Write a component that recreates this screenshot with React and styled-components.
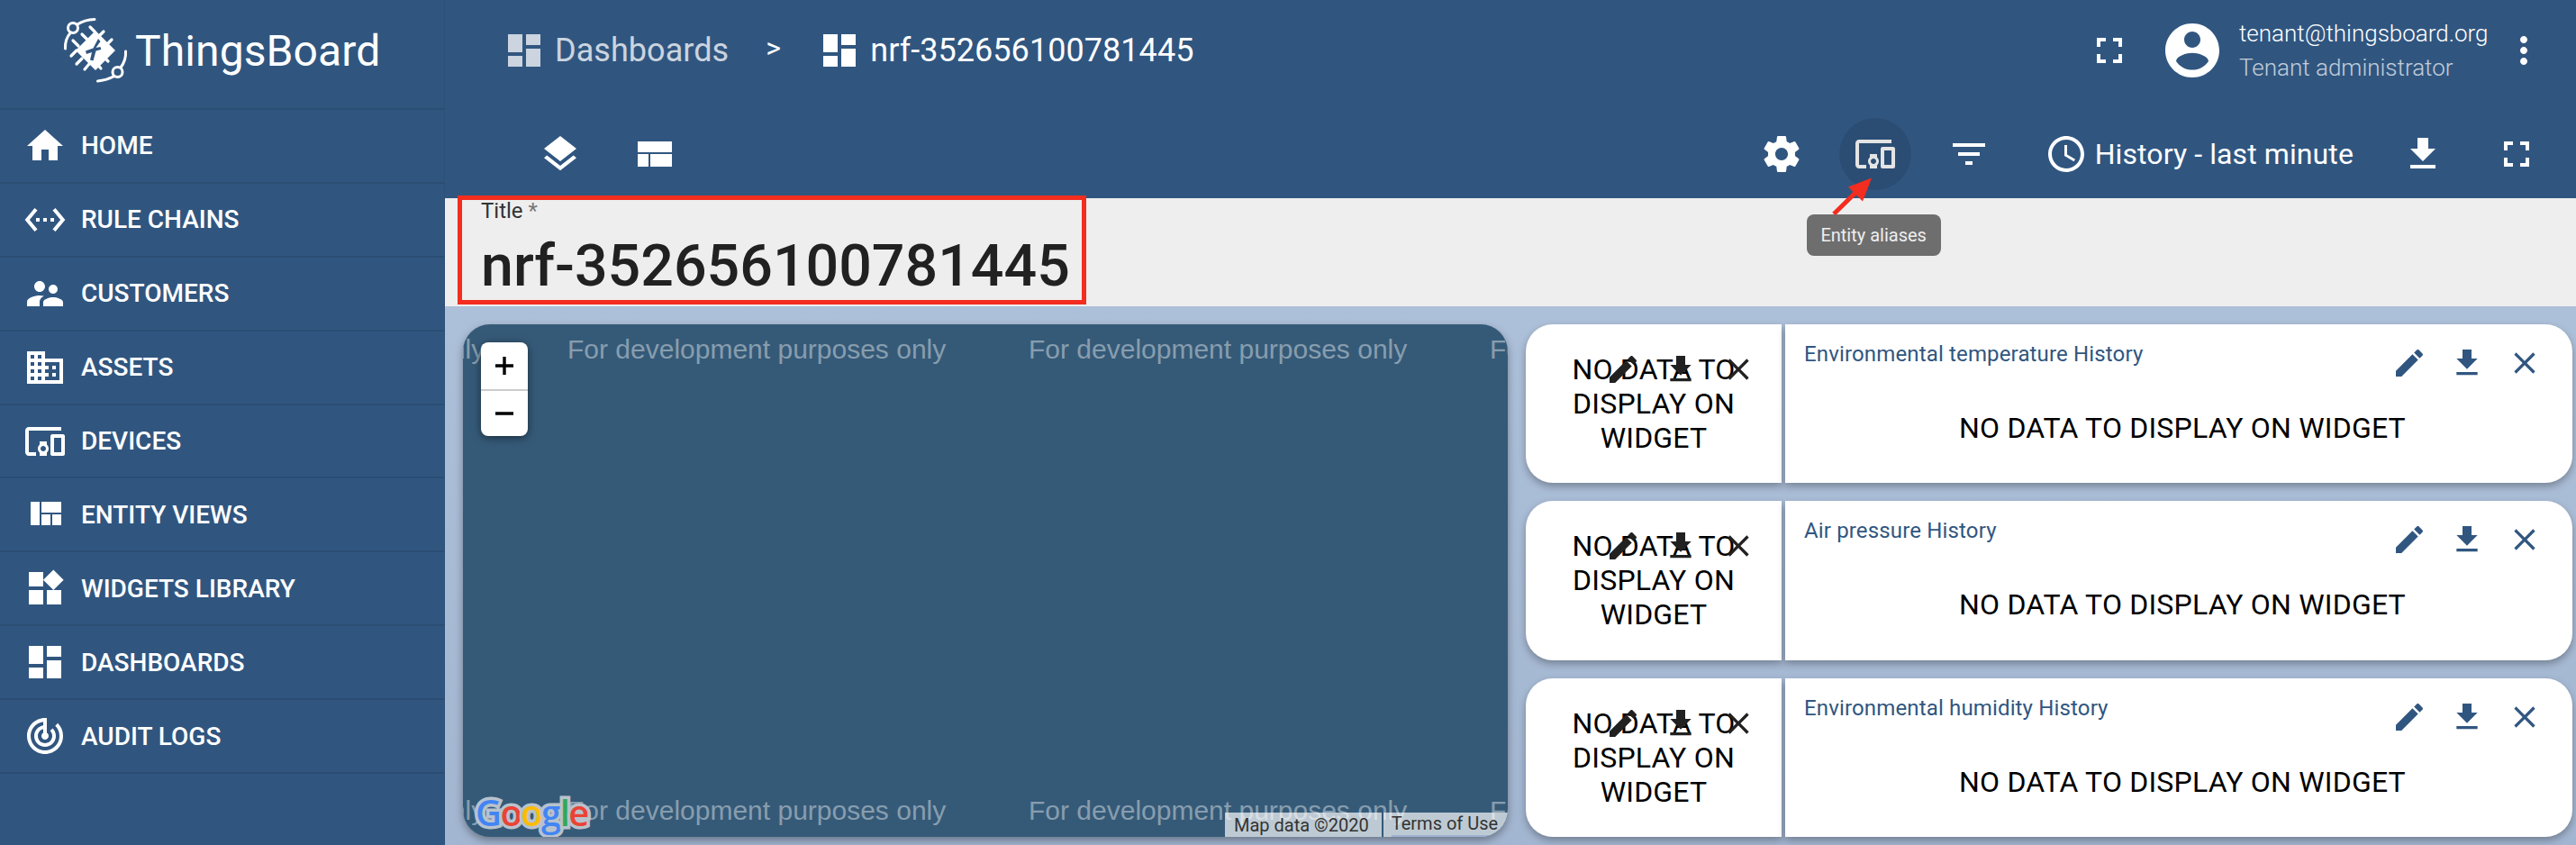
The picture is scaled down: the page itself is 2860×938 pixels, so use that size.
import React from "react";
import styled, { createGlobalStyle } from "styled-components";

const paths = {
  home: "M10 20v-6h4v6h5v-8h3L12 3 2 12h3v8z",
  rule: "M7.77 6.76L6.23 5.48.82 12l5.41 6.52 1.54-1.28L3.42 12l4.35-5.24zM7 13h2v-2H7v2zm10-2h-2v2h2v-2zm-6 2h2v-2h-2v2zm6.77-7.52l-1.54 1.28L20.58 12l-4.35 5.24 1.54 1.28L23.18 12l-5.41-6.52z",
  customers:
    "M16.5 12c1.38 0 2.49-1.12 2.49-2.5S17.88 7 16.5 7C15.12 7 14 8.12 14 9.5s1.12 2.5 2.5 2.5zM9 11c1.66 0 2.99-1.34 2.99-3S10.66 5 9 5C7.34 5 6 6.34 6 8s1.34 3 3 3zm7.5 3c-1.83 0-5.5.92-5.5 2.75V19h11v-2.25c0-1.83-3.67-2.75-5.5-2.75zM9 13c-2.33 0-7 1.17-7 3.5V19h7v-2.25c0-.85.33-2.34 2.37-3.47C10.5 13.1 9.66 13 9 13z",
  domain:
    "M12 7V3H2v18h20V7H12zM6 19H4v-2h2v2zm0-4H4v-2h2v2zm0-4H4V9h2v2zm0-4H4V5h2v2zm4 12H8v-2h2v2zm0-4H8v-2h2v2zm0-4H8V9h2v2zm0-4H8V5h2v2zm10 12h-8v-2h2v-2h-2v-2h2v-2h-2V9h8v10zm-2-8h-2v2h2v-2zm0 4h-2v2h2v-2z",
  devices:
    "M3 6h18V4H3c-1.1 0-2 .9-2 2v12c0 1.1.9 2 2 2h4v-2H3V6zm10 6H9v1.78c-.61.55-1 1.33-1 2.22s.39 1.67 1 2.22V20h4v-1.78c.61-.55 1-1.34 1-2.22s-.39-1.67-1-2.22V12zm-2 5.5c-.83 0-1.5-.67-1.5-1.5s.67-1.5 1.5-1.5 1.5.67 1.5 1.5-.67 1.5-1.5 1.5zM22 8h-6c-.5 0-1 .5-1 1v10c0 .5.5 1 1 1h6c.5 0 1-.5 1-1V9c0-.5-.5-1-1-1zm-1 10h-4v-8h4v8z",
  quilt: "M10 18h5v-6h-5v6zm-6 0h5V5H4v13zm12 0h5v-6h-5v6zM10 5v6h11V5H10z",
  widgets:
    "M13 13v8h8v-8h-8zM3 21h8v-8H3v8zM3 3v8h8V3H3zm13.66-1.31L11 7.34 16.66 13l5.66-5.66-5.66-5.65z",
  dashboard: "M3 13h8V3H3v10zm0 8h8v-6H3v6zm10 0h8V11h-8v10zm0-18v6h8V3h-8z",
  audit:
    "M19.07 4.93l-1.41 1.41C19.1 7.79 20 9.79 20 12c0 4.42-3.58 8-8 8s-8-3.58-8-8c0-4.08 3.05-7.44 7-7.93v2.02C8.16 6.57 6 9.03 6 12c0 3.31 2.69 6 6 6s6-2.69 6-6c0-1.66-.67-3.16-1.76-4.24l-1.41 1.41C15.55 9.9 16 10.9 16 12c0 2.21-1.79 4-4 4s-4-1.79-4-4c0-1.86 1.28-3.41 3-3.86v2.14c-.6.35-1 .98-1 1.72 0 1.1.9 2 2 2s2-.9 2-2c0-.74-.4-1.38-1-1.72V2h-1C6.48 2 2 6.48 2 12s4.48 10 10 10 10-4.48 10-10c0-2.76-1.12-5.26-2.93-7.07z",
  layers:
    "M11.99 18.54l-7.37-5.73L3 14.07l9 7 9-7-1.63-1.27-7.38 5.74zM12 16l7.36-5.73L21 9l-9-7-9 7 1.63 1.27L12 16z",
  compact: "M3 19h6v-7H3v7zm7 0h12v-7H10v7zM3 5v6h19V5H3z",
  fullscreen:
    "M7 14H5v5h5v-2H7v-3zm-2-4h2V7h3V5H5v5zm12 7h-3v2h5v-5h-2v3zM14 5v2h3v3h2V5h-5z",
  account:
    "M12 2C6.48 2 2 6.48 2 12s4.48 10 10 10 10-4.48 10-10S17.52 2 12 2zm0 3c1.66 0 3 1.34 3 3s-1.34 3-3 3-3-1.34-3-3 1.34-3 3-3zm0 14.2c-2.5 0-4.71-1.28-6-3.22.03-1.99 4-3.08 6-3.08 1.99 0 5.97 1.09 6 3.08-1.29 1.94-3.5 3.22-6 3.22z",
  more: "M12 8c1.1 0 2-.9 2-2s-.9-2-2-2-2 .9-2 2 .9 2 2 2zm0 2c-1.1 0-2 .9-2 2s.9 2 2 2 2-.9 2-2-.9-2-2-2zm0 6c-1.1 0-2 .9-2 2s.9 2 2 2 2-.9 2-2-.9-2-2-2z",
  settings:
    "M19.43 12.98c.04-.32.07-.64.07-.98s-.03-.66-.07-.98l2.11-1.65c.19-.15.24-.42.12-.64l-2-3.46c-.12-.22-.39-.3-.61-.22l-2.49 1c-.52-.4-1.08-.73-1.69-.98l-.38-2.65C14.46 2.18 14.25 2 14 2h-4c-.25 0-.46.18-.49.42l-.38 2.65c-.61.25-1.17.59-1.69.98l-2.49-1c-.23-.09-.49 0-.61.22l-2 3.46c-.13.22-.07.49.12.64l2.11 1.65c-.04.32-.07.65-.07.98s.03.66.07.98l-2.11 1.65c-.19.15-.24.42-.12.64l2 3.46c.12.22.39.3.61.22l2.49-1c.52.4 1.08.73 1.69.98l.38 2.65c.03.24.24.42.49.42h4c.25 0 .46-.18.49-.42l.38-2.65c.61-.25 1.17-.59 1.69-.98l2.49 1c.23.09.49 0 .61-.22l2-3.46c.12-.22.07-.49-.12-.64l-2.11-1.65zM12 15.5c-1.93 0-3.5-1.57-3.5-3.5s1.57-3.5 3.5-3.5 3.5 1.57 3.5 3.5-1.57 3.5-3.5 3.5z",
  filter: "M10 18h4v-2h-4v2zM3 6v2h18V6H3zm3 7h12v-2H6v2z",
  clock:
    "M11.99 2C6.47 2 2 6.48 2 12s4.47 10 9.99 10C17.52 22 22 17.52 22 12S17.52 2 11.99 2zM12 20c-4.42 0-8-3.58-8-8s3.58-8 8-8 8 3.58 8 8-3.58 8-8 8zm.5-13H11v6l5.25 3.15.75-1.23-4.5-2.67z",
  download: "M19 9h-4V3H9v6H5l7 7 7-7zM5 18v2h14v-2H5z",
  edit: "M3 17.25V21h3.75L17.81 9.94l-3.75-3.75L3 17.25zM20.71 7.04c.39-.39.39-1.02 0-1.41l-2.34-2.34c-.39-.39-1.02-.39-1.41 0l-1.83 1.83 3.75 3.75 1.83-1.83z",
  close:
    "M19 6.41L17.59 5 12 10.59 6.41 5 5 6.41 10.59 12 5 17.59 6.41 19 12 13.41 17.59 19 19 17.59 13.41 12z",
};

const menu = [
  ["home", "HOME"],
  ["rule", "RULE CHAINS"],
  ["customers", "CUSTOMERS"],
  ["domain", "ASSETS"],
  ["devices", "DEVICES"],
  ["quilt", "ENTITY VIEWS"],
  ["widgets", "WIDGETS LIBRARY"],
  ["dashboard", "DASHBOARDS"],
  ["audit", "AUDIT LOGS"],
];

const histories = [
  "Environmental temperature History",
  "Air pressure History",
  "Environmental humidity History",
];

const GlobalStyle = createGlobalStyle`
  html, body {
    margin: 0;
    padding: 0;
    background: #eeeeee;
  }
  * {
    box-sizing: border-box;
  }
`;

const Page = styled.div`
  display: flex;
  width: 2860px;
  height: 938px;
  overflow: hidden;
  font-family: Roboto, "Noto Sans", sans-serif;
`;

const Sidebar = styled.aside`
  flex: 0 0 494px;
  background: #305680;
  color: #fff;
  border-right: 1px solid #2d5078;
`;

const Brand = styled.div`
  display: flex;
  align-items: center;
  gap: 8px;
  height: 122px;
  padding: 0 0 8px 70px;
  border-bottom: 2px solid #2b4d73;
`;

const BrandName = styled.span`
  font-size: 48px;
  font-weight: 400;
  letter-spacing: 0.1px;
`;

const MenuRow = styled.div`
  display: flex;
  align-items: center;
  height: 81.9px;
  padding-left: 26px;
  gap: 16px;
  border-bottom: 2px solid #2b4d73;
  font-size: 28px;
  font-weight: 500;
`;

const Icon = styled.svg`
  display: block;
  flex: none;
  width: ${(p) => p.size || 48}px;
  height: ${(p) => p.size || 48}px;
  fill: currentColor;
`;

const Main = styled.main`
  flex: 1;
  display: flex;
  flex-direction: column;
  min-width: 0;
`;

const TopBar = styled.header`
  height: 220px;
  background: #305680;
  color: #fff;
`;

const CrumbRow = styled.div`
  display: flex;
  align-items: center;
  height: 112px;
  padding-left: 64px;
`;

const Crumb = styled.div`
  display: flex;
  align-items: center;
  gap: 10px;
  font-size: 36px;
  letter-spacing: 0.05px;
  opacity: ${(p) => (p.dim ? 0.75 : 1)};
`;

const CrumbArrow = styled.span`
  width: 99px;
  padding-left: 41px;
  font-size: 32px;
  margin-top: -6px;
`;

const UserArea = styled.div`
  display: flex;
  align-items: center;
  margin-left: auto;
  padding-right: 34px;
`;

const UserText = styled.div`
  width: 292px;
  margin-left: 12px;
  font-weight: 300;
  font-size: 26px;
  line-height: 38px;
`;

const UserRole = styled.div`
  opacity: 0.7;
`;

const ToolRow = styled.div`
  display: flex;
  align-items: center;
  height: 108px;
  padding: 9px 26px 0 104px;
`;

const ToolButton = styled.div`
  position: relative;
  display: flex;
  align-items: center;
  justify-content: center;
  flex: none;
  width: 80px;
  height: 80px;
  border-radius: 50%;
  margin-left: ${(p) => p.offset || 0}px;
  background: ${(p) => (p.active ? "#2b4d73" : "transparent")};
  color: ${(p) => (p.active ? "#e4e4e4" : "#fff")};
`;

const ToolSpacer = styled.div`
  flex: 1;
`;

const HistoryLabel = styled.div`
  display: flex;
  align-items: center;
  gap: 8px;
  margin-left: 44px;
  font-size: 32px;
  letter-spacing: 0.1px;
`;

const Tooltip = styled.div`
  position: absolute;
  top: 107px;
  left: -36px;
  width: 149px;
  height: 46px;
  display: flex;
  align-items: center;
  justify-content: center;
  background: #6e6e6e;
  border-radius: 8px;
  color: #eeeeee;
  font-size: 20px;
  white-space: nowrap;
  z-index: 3;
`;

const Arrow = styled.svg`
  position: absolute;
  top: 60px;
  left: -14px;
  width: 60px;
  height: 50px;
  z-index: 4;
`;

const TitleBar = styled.section`
  position: relative;
  height: 120px;
  padding: 0 0 0 40px;
  background: #eeeeee;
  color: #212121;
`;

const TitleLabel = styled.div`
  padding-top: 1px;
  height: 33px;
  font-size: 24px;
  line-height: 26px;
  color: #333;
`;

const Req = styled.span`
  color: #777;
`;

const TitleValue = styled.div`
  font-size: 64.5px;
  font-weight: 500;
  line-height: 84px;
`;

const RedBox = styled.div`
  position: absolute;
  top: -3px;
  left: 14px;
  width: 698px;
  height: 121px;
  border: 5px solid #f32d1f;
`;

const Board = styled.section`
  flex: 1;
  display: grid;
  grid-template-columns: 1160px 1162px;
  column-gap: 20px;
  padding: 20px 0 9px 20px;
  background: linear-gradient(#adc0d9, #a3b6d1);
`;

const MapCard = styled.div`
  position: relative;
  overflow: hidden;
  background: #355a78;
  border-radius: 30px;
  box-shadow: 0 4px 10px rgba(0, 0, 0, 0.35);
`;

const Watermark = styled.span`
  position: absolute;
  top: ${(p) => p.y}px;
  left: ${(p) => p.x}px;
  font-family: "Liberation Sans", Arial, sans-serif;
  font-size: 30px;
  line-height: 32px;
  color: rgba(255, 255, 255, 0.42);
  white-space: nowrap;
`;

const Zoom = styled.div`
  position: absolute;
  top: 20px;
  left: 20px;
  width: 52px;
  height: 104px;
  display: grid;
  grid-template-rows: 1fr 1fr;
  background: #fff;
  border-radius: 8px;
  box-shadow: 0 2px 10px rgba(0, 0, 0, 0.5);
  color: #000;
`;

const ZoomBtn = styled.div`
  display: flex;
  align-items: center;
  justify-content: center;
  border-top: ${(p) => (p.second ? "2px solid #ccc" : "none")};
`;

const Google = styled.div`
  position: absolute;
  left: 14px;
  bottom: 5px;
  font-family: "Open Sans", "Liberation Sans", sans-serif;
  font-size: 40px;
  line-height: 44px;
  font-weight: 600;
  letter-spacing: -1.6px;
  -webkit-text-stroke: 7px #b8c2cd;
  paint-order: stroke fill;
`;

const GLetter = styled.span`
  color: ${(p) => p.c};
  paint-order: stroke fill;
`;

const Attribution = styled.div`
  position: absolute;
  right: 0;
  bottom: 0;
  width: 314px;
  height: 27px;
  display: flex;
  align-items: center;
  padding-left: 10px;
  background: rgba(255, 255, 255, 0.68);
  color: #333;
  font-size: 20px;
`;

const AttrTerms = styled.span`
  margin-left: 14px;
  padding-left: 9px;
  height: 27px;
  border-left: 2px solid #355a78;
`;

const TermsLink = styled.span`
  display: block;
  width: 116px;
  height: 27px;
  line-height: 25px;
  white-space: nowrap;
  border-bottom: 2px solid #9fb0d2;
`;

const Cards = styled.div`
  display: grid;
  grid-template-rows: repeat(3, 1fr);
  row-gap: 20px;
`;

const CardRow = styled.div`
  display: grid;
  grid-template-columns: 284px 874px;
  column-gap: 4px;
`;

const Widget = styled.div`
  position: relative;
  background: #fff;
  color: #000;
  border-radius: ${(p) => (p.side === "left" ? "30px 0 0 30px" : "0 30px 30px 0")};
  box-shadow: 0 4px 8px rgba(0, 0, 0, 0.3);
`;

const NoData = styled.div`
  position: absolute;
  left: 0;
  right: 0;
  bottom: 0;
  top: ${(p) => (p.side === "left" ? "0" : "54px")};
  display: flex;
  align-items: center;
  justify-content: center;
  padding: ${(p) => (p.side === "left" ? "0 40px" : "0 0 0 8px")};
  text-align: center;
  font-size: 32px;
  line-height: 38px;
  letter-spacing: 0.2px;
`;

const WidgetTitle = styled.div`
  position: absolute;
  top: 18px;
  left: 21px;
  font-size: 24px;
  line-height: 30px;
  letter-spacing: 0.15px;
  color: #305680;
`;

const WidgetActions = styled.div`
  position: absolute;
  display: flex;
  gap: 24px;
  top: ${(p) => (p.side === "left" ? "30px" : "23px")};
  right: ${(p) => (p.side === "left" ? "28px" : "33px")};
  color: ${(p) => (p.side === "left" ? "#212121" : "#305680")};
`;

function MaterialIcon({ name, size }) {
  return (
    <Icon size={size} viewBox="0 0 24 24" aria-hidden="true">
      <path d={paths[name]} />
    </Icon>
  );
}

function Logo() {
  return (
    <svg width="72" height="72" viewBox="0 0 72 72" fill="none">
      <g stroke="#fff" strokeWidth="3" strokeLinecap="round">
        <path d="M2.5 34C2 26 5 20 8.5 16" />
        <path d="M16 7C22 3 28 1.8 35 1.5" />
        <circle cx="11" cy="11" r="5.5" />
        <path d="M69.5 37C70 45 67 51 64 55" />
        <path d="M56 65C50 68 44 69.5 38.5 70" />
        <circle cx="60.5" cy="60" r="5.5" />
        <g strokeWidth="3.2">
          <path d="M21 18l7 7M30 10l5 5M45 15l-5 5M54 24l-4 4M11 25l6 6M9 42l6-6M15 51l6-6M24 57l5-6M50 48l-6-6M42 56l-5-6" />
        </g>
      </g>
      <path d="M36 14L58 36 36 58 14 36z" fill="#fff" />
      <path d="M39 23l2.5 3-5 7 5-1 .8 3-5.8 1.5-3 11-3.5-1 2-8.5-6 2-1-3.5 8.5-3z" fill="#305680" />
    </svg>
  );
}

function WidgetPane({ side, title }) {
  return (
    <Widget side={side}>
      <NoData side={side}>NO DATA TO DISPLAY ON WIDGET</NoData>
      {title && <WidgetTitle>{title}</WidgetTitle>}
      <WidgetActions side={side}>
        <MaterialIcon name="edit" size={40} />
        <MaterialIcon name="download" size={40} />
        <MaterialIcon name="close" size={40} />
      </WidgetActions>
    </Widget>
  );
}

export default function App() {
  return (
    <Page>
      <GlobalStyle />
      <Sidebar>
        <Brand>
          <Logo />
          <BrandName>ThingsBoard</BrandName>
        </Brand>
        {menu.map(([icon, label]) => (
          <MenuRow key={label}>
            <MaterialIcon name={icon} />
            {label}
          </MenuRow>
        ))}
      </Sidebar>
      <Main>
        <TopBar>
          <CrumbRow>
            <Crumb dim>
              <MaterialIcon name="dashboard" />
              Dashboards
            </Crumb>
            <CrumbArrow>&gt;</CrumbArrow>
            <Crumb>
              <MaterialIcon name="dashboard" />
              nrf-352656100781445
            </Crumb>
            <UserArea>
              <MaterialIcon name="fullscreen" />
              <ToolButton offset={28}>
                <MaterialIcon name="account" size={72} />
              </ToolButton>
              <UserText>
                <div>tenant@thingsboard.org</div>
                <UserRole>Tenant administrator</UserRole>
              </UserText>
              <MaterialIcon name="more" />
            </UserArea>
          </CrumbRow>
          <ToolRow>
            <MaterialIcon name="layers" />
            <ToolButton offset={40}>
              <MaterialIcon name="compact" />
            </ToolButton>
            <ToolSpacer />
            <ToolButton>
              <MaterialIcon name="settings" />
            </ToolButton>
            <ToolButton offset={24} active>
              <MaterialIcon name="devices" />
              <Arrow viewBox="0 0 60 50">
                <path d="M8 46.5L33 22" stroke="#f32d1f" strokeWidth="5" />
                <path d="M50 6.5L24 16.5 40 32.5z" fill="#f32d1f" />
              </Arrow>
              <Tooltip>Entity aliases</Tooltip>
            </ToolButton>
            <ToolButton offset={24}>
              <MaterialIcon name="filter" />
            </ToolButton>
            <HistoryLabel>
              <MaterialIcon name="clock" />
              History - last minute
            </HistoryLabel>
            <ToolButton offset={37}>
              <MaterialIcon name="download" />
            </ToolButton>
            <ToolButton offset={24}>
              <MaterialIcon name="fullscreen" />
            </ToolButton>
          </ToolRow>
        </TopBar>
        <TitleBar>
          <TitleLabel>
            Title <Req>*</Req>
          </TitleLabel>
          <TitleValue>nrf-352656100781445</TitleValue>
          <RedBox />
        </TitleBar>
        <Board>
          <MapCard>
            {[-396, 116, 628, 1140].map((x) => (
              <React.Fragment key={x}>
                <Watermark x={x} y={12}>
                  For development purposes only
                </Watermark>
                <Watermark x={x} y={524}>
                  For development purposes only
                </Watermark>
              </React.Fragment>
            ))}
            <Zoom>
              <ZoomBtn>
                <svg width="24" height="24" viewBox="0 0 24 24">
                  <path d="M2 12h20M12 2v20" stroke="#000" strokeWidth="3.4" />
                </svg>
              </ZoomBtn>
              <ZoomBtn second>
                <svg width="24" height="24" viewBox="0 0 24 24">
                  <path d="M2 12h20" stroke="#000" strokeWidth="3.4" />
                </svg>
              </ZoomBtn>
            </Zoom>
            <Google>
              <GLetter c="#4285f4">G</GLetter>
              <GLetter c="#ea4335">o</GLetter>
              <GLetter c="#fbbc05">o</GLetter>
              <GLetter c="#4285f4">g</GLetter>
              <GLetter c="#34a853">l</GLetter>
              <GLetter c="#ea4335">e</GLetter>
            </Google>
            <Attribution>
              <span>Map data ©2020</span>
              <AttrTerms>
                <TermsLink>Terms of Use</TermsLink>
              </AttrTerms>
            </Attribution>
          </MapCard>
          <Cards>
            {histories.map((title) => (
              <CardRow key={title}>
                <WidgetPane side="left" />
                <WidgetPane side="right" title={title} />
              </CardRow>
            ))}
          </Cards>
        </Board>
      </Main>
    </Page>
  );
}
